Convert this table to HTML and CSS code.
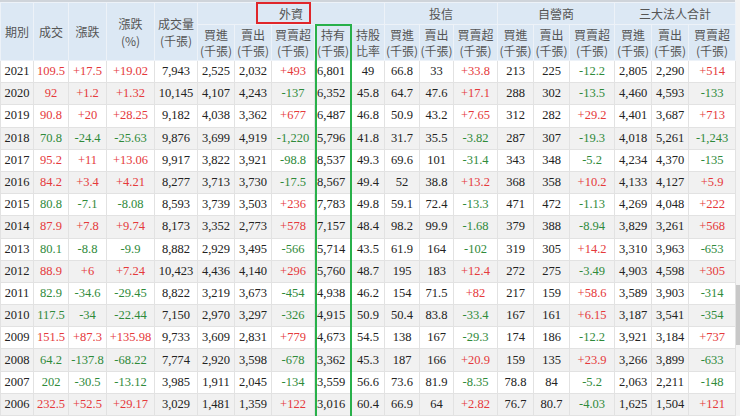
FILE: index.html
```html
<!DOCTYPE html>
<html lang="zh-Hant">
<head>
<meta charset="utf-8">
<title>三大法人買賣超</title>
<link rel="stylesheet" href="styles.css">
</head>
<body>
<div class="page">
  <div class="wrap">
    <table class="grid">
      <colgroup>
        <col style="width:33px"><col style="width:35px"><col style="width:38px"><col style="width:48px"><col style="width:43px">
        <col style="width:37px"><col style="width:37px"><col style="width:43px"><col style="width:37px"><col style="width:33px">
        <col style="width:35px"><col style="width:34px"><col style="width:44px">
        <col style="width:36px"><col style="width:36px"><col style="width:45px">
        <col style="width:37px"><col style="width:37px"><col style="width:47px">
      </colgroup>
      <thead>
        <tr class="h1">
          <th rowspan="2">期別</th>
          <th rowspan="2">成交</th>
          <th rowspan="2">漲跌</th>
          <th rowspan="2" class="two">漲跌<br>(%)</th>
          <th rowspan="2" class="two">成交量<br>(千張)</th>
          <th colspan="5">外資</th>
          <th colspan="3">投信</th>
          <th colspan="3">自營商</th>
          <th colspan="3">三大法人合計</th>
        </tr>
        <tr class="h2">
          <th>買進<br>(千張)</th><th>賣出<br>(千張)</th><th>買賣超<br>(千張)</th><th>持有<br>(千張)</th><th>持股<br>比率</th>
          <th>買進<br>(千張)</th><th>賣出<br>(千張)</th><th>買賣超<br>(千張)</th>
          <th>買進<br>(千張)</th><th>賣出<br>(千張)</th><th>買賣超<br>(千張)</th>
          <th>買進<br>(千張)</th><th>賣出<br>(千張)</th><th>買賣超<br>(千張)</th>
        </tr>
      </thead>
      <tbody>
        <tr><td>2021</td><td class="u">109.5</td><td class="u">+17.5</td><td class="u">+19.02</td><td>7,943</td><td>2,525</td><td>2,032</td><td class="u">+493</td><td class="hold">6,801</td><td>49</td><td>66.8</td><td>33</td><td class="u">+33.8</td><td>213</td><td>225</td><td class="d">-12.2</td><td>2,805</td><td>2,290</td><td class="u">+514</td></tr>
        <tr><td>2020</td><td class="u">92</td><td class="u">+1.2</td><td class="u">+1.32</td><td>10,145</td><td>4,107</td><td>4,243</td><td class="d">-137</td><td class="hold">6,352</td><td>45.8</td><td>64.7</td><td>47.6</td><td class="u">+17.1</td><td>288</td><td>302</td><td class="d">-13.5</td><td>4,460</td><td>4,593</td><td class="d">-133</td></tr>
        <tr><td>2019</td><td class="u">90.8</td><td class="u">+20</td><td class="u">+28.25</td><td>9,182</td><td>4,038</td><td>3,362</td><td class="u">+677</td><td class="hold">6,487</td><td>46.8</td><td>50.9</td><td>43.2</td><td class="u">+7.65</td><td>312</td><td>282</td><td class="u">+29.2</td><td>4,401</td><td>3,687</td><td class="u">+713</td></tr>
        <tr><td>2018</td><td class="d">70.8</td><td class="d">-24.4</td><td class="d">-25.63</td><td>9,876</td><td>3,699</td><td>4,919</td><td class="d">-1,220</td><td class="hold">5,796</td><td>41.8</td><td>31.7</td><td>35.5</td><td class="d">-3.82</td><td>287</td><td>307</td><td class="d">-19.3</td><td>4,018</td><td>5,261</td><td class="d">-1,243</td></tr>
        <tr><td>2017</td><td class="u">95.2</td><td class="u">+11</td><td class="u">+13.06</td><td>9,917</td><td>3,822</td><td>3,921</td><td class="d">-98.8</td><td class="hold">8,537</td><td>49.3</td><td>69.6</td><td>101</td><td class="d">-31.4</td><td>343</td><td>348</td><td class="d">-5.2</td><td>4,234</td><td>4,370</td><td class="d">-135</td></tr>
        <tr><td>2016</td><td class="u">84.2</td><td class="u">+3.4</td><td class="u">+4.21</td><td>8,277</td><td>3,713</td><td>3,730</td><td class="d">-17.5</td><td class="hold">8,567</td><td>49.4</td><td>52</td><td>38.8</td><td class="u">+13.2</td><td>368</td><td>358</td><td class="u">+10.2</td><td>4,133</td><td>4,127</td><td class="u">+5.9</td></tr>
        <tr><td>2015</td><td class="d">80.8</td><td class="d">-7.1</td><td class="d">-8.08</td><td>8,593</td><td>3,739</td><td>3,503</td><td class="u">+236</td><td class="hold">7,783</td><td>49.8</td><td>59.1</td><td>72.4</td><td class="d">-13.3</td><td>471</td><td>472</td><td class="d">-1.13</td><td>4,269</td><td>4,048</td><td class="u">+222</td></tr>
        <tr><td>2014</td><td class="u">87.9</td><td class="u">+7.8</td><td class="u">+9.74</td><td>8,173</td><td>3,352</td><td>2,773</td><td class="u">+578</td><td class="hold">7,157</td><td>48.4</td><td>98.2</td><td>99.9</td><td class="d">-1.68</td><td>379</td><td>388</td><td class="d">-8.94</td><td>3,829</td><td>3,261</td><td class="u">+568</td></tr>
        <tr><td>2013</td><td class="d">80.1</td><td class="d">-8.8</td><td class="d">-9.9</td><td>8,882</td><td>2,929</td><td>3,495</td><td class="d">-566</td><td class="hold">5,714</td><td>43.5</td><td>61.9</td><td>164</td><td class="d">-102</td><td>319</td><td>305</td><td class="u">+14.2</td><td>3,310</td><td>3,963</td><td class="d">-653</td></tr>
        <tr><td>2012</td><td class="u">88.9</td><td class="u">+6</td><td class="u">+7.24</td><td>10,423</td><td>4,436</td><td>4,140</td><td class="u">+296</td><td class="hold">5,760</td><td>48.7</td><td>195</td><td>183</td><td class="u">+12.4</td><td>272</td><td>275</td><td class="d">-3.49</td><td>4,903</td><td>4,598</td><td class="u">+305</td></tr>
        <tr><td>2011</td><td class="d">82.9</td><td class="d">-34.6</td><td class="d">-29.45</td><td>8,822</td><td>3,219</td><td>3,673</td><td class="d">-454</td><td class="hold">4,938</td><td>46.2</td><td>154</td><td>71.5</td><td class="u">+82</td><td>217</td><td>159</td><td class="u">+58.6</td><td>3,589</td><td>3,903</td><td class="d">-314</td></tr>
        <tr><td>2010</td><td class="d">117.5</td><td class="d">-34</td><td class="d">-22.44</td><td>7,150</td><td>2,970</td><td>3,297</td><td class="d">-326</td><td class="hold">4,915</td><td>50.9</td><td>50.4</td><td>83.8</td><td class="d">-33.4</td><td>167</td><td>161</td><td class="u">+6.15</td><td>3,187</td><td>3,541</td><td class="d">-354</td></tr>
        <tr><td>2009</td><td class="u">151.5</td><td class="u">+87.3</td><td class="u">+135.98</td><td>9,733</td><td>3,609</td><td>2,831</td><td class="u">+779</td><td class="hold">4,673</td><td>54.5</td><td>138</td><td>167</td><td class="d">-29.3</td><td>174</td><td>186</td><td class="d">-12.2</td><td>3,921</td><td>3,184</td><td class="u">+737</td></tr>
        <tr><td>2008</td><td class="d">64.2</td><td class="d">-137.8</td><td class="d">-68.22</td><td>7,774</td><td>2,920</td><td>3,598</td><td class="d">-678</td><td class="hold">3,362</td><td>45.3</td><td>187</td><td>166</td><td class="u">+20.9</td><td>159</td><td>135</td><td class="u">+23.9</td><td>3,266</td><td>3,899</td><td class="d">-633</td></tr>
        <tr><td>2007</td><td class="d">202</td><td class="d">-30.5</td><td class="d">-13.12</td><td>3,985</td><td>1,911</td><td>2,045</td><td class="d">-134</td><td class="hold">3,559</td><td>56.6</td><td>73.6</td><td>81.9</td><td class="d">-8.35</td><td>78.8</td><td>84</td><td class="d">-5.2</td><td>2,063</td><td>2,211</td><td class="d">-148</td></tr>
        <tr><td>2006</td><td class="u">232.5</td><td class="u">+52.5</td><td class="u">+29.17</td><td>3,029</td><td>1,481</td><td>1,359</td><td class="u">+122</td><td class="hold">3,016</td><td>60.4</td><td>66.9</td><td>64</td><td class="u">+2.82</td><td>76.7</td><td>80.7</td><td class="d">-4.03</td><td>1,625</td><td>1,504</td><td class="u">+121</td></tr>
      </tbody>
    </table>
    <div class="mark-red"></div>
    <div class="mark-green"></div>
  </div>
  <div class="scroll"><div class="track"></div><div class="thumb"></div></div>
</div>
</body>
</html>
```
FILE: styles.css
```css
html, body {
  margin: 0;
  padding: 0;
  background: #ffffff;
  overflow: hidden;
}
.page {
  display: flex;
  width: 740px;
  height: 416px;
  overflow: hidden;
}
.wrap {
  position: relative;
  width: 735px;
  flex: none;
  border-top: 2px solid #cfd4da;
  box-sizing: border-box;
}
.grid {
  border-collapse: collapse;
  table-layout: fixed;
  width: 735px;
  font-family: "Liberation Serif", "Times New Roman", serif;
  font-size: 12.5px;
  color: #222;
}
.grid th {
  background: #dce8f4;
  color: #555;
  font-family: "Noto Sans CJK TC", "Noto Sans CJK SC", sans-serif;
  font-weight: normal;
  font-size: 12px;
  line-height: 16px;
  padding: 0;
  border: 1px solid #edf2f8;
  text-align: center;
  vertical-align: middle;
}
.grid tr.h1 { height: 22px; }
.grid tr.h2 { height: 36px; }
.grid th.two { line-height: 17px; }
.grid td {
  height: 21.2px;
  padding: 0;
  border: 1px solid #e2e2e2;
  text-align: center;
  vertical-align: middle;
  white-space: nowrap;
}
.grid tbody tr:nth-child(even) td { background: #f1f1f1; }
.grid td.u { color: #e5393b; }
.grid td.d { color: #2f8a3a; }
.grid td.hold { text-align: left; padding-left: 2px; }
.mark-red {
  position: absolute;
  left: 256px;
  top: 0px;
  width: 55px;
  height: 22px;
  border: 2px solid #e0262a;
  box-sizing: border-box;
}
.mark-green {
  position: absolute;
  left: 315px;
  top: 22px;
  width: 37px;
  height: 420px;
  border: 2px solid #28b04a;
  box-sizing: border-box;
}
.scroll {
  width: 5px;
  flex: none;
  display: flex;
  flex-direction: column;
  background: #f3f3f3;
}
.track { height: 285px; }
.thumb { height: 60px; background: #c8c8c8; }
```
